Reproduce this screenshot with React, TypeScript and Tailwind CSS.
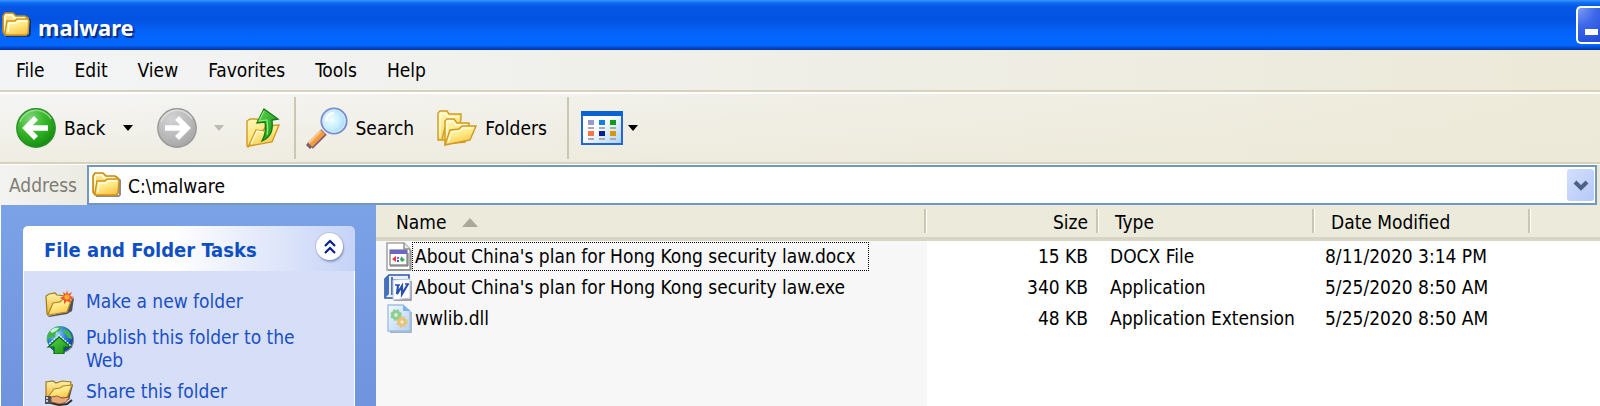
import type { ReactNode } from "react";

const menuItems = ["File", "Edit", "View", "Favorites", "Tools", "Help"];

const files = [
  {
    name: "About China's plan for Hong Kong security law.docx",
    size: "15 KB",
    type: "DOCX File",
    modified: "8/11/2020 3:14 PM",
    icon: <UnknownFileIcon />,
    focused: true,
  },
  {
    name: "About China's plan for Hong Kong security law.exe",
    size: "340 KB",
    type: "Application",
    modified: "5/25/2020 8:50 AM",
    icon: <WordIcon />,
    focused: false,
  },
  {
    name: "wwlib.dll",
    size: "48 KB",
    type: "Application Extension",
    modified: "5/25/2020 8:50 AM",
    icon: <DllIcon />,
    focused: false,
  },
];

const tasks = [
  { label: "Make a new folder", icon: <NewFolderIcon /> },
  { label: "Publish this folder to the Web", icon: <PublishIcon /> },
  { label: "Share this folder", icon: <ShareIcon /> },
];

/* ---------- icons ---------- */

function Gradients() {
  return (
    <svg width="0" height="0" className="absolute" aria-hidden="true">
      <defs>
        <linearGradient id="folder" x1="0" y1="0" x2="0.5" y2="1">
          <stop offset="0" stopColor="#fffbc4" />
          <stop offset="0.55" stopColor="#ffe884" />
          <stop offset="1" stopColor="#fbc74e" />
        </linearGradient>
        <linearGradient id="folderBack" x1="0" y1="0" x2="0" y2="1">
          <stop offset="0" stopColor="#fff3a6" />
          <stop offset="1" stopColor="#e6ae35" />
        </linearGradient>
        <radialGradient id="green" cx="0.35" cy="0.25" r="0.8">
          <stop offset="0" stopColor="#7fd67a" />
          <stop offset="0.45" stopColor="#3aba2b" />
          <stop offset="1" stopColor="#128a0c" />
        </radialGradient>
        <radialGradient id="gray" cx="0.35" cy="0.25" r="0.85">
          <stop offset="0" stopColor="#d2d2d2" />
          <stop offset="0.5" stopColor="#bdbdbd" />
          <stop offset="1" stopColor="#a3a3a3" />
        </radialGradient>
        <linearGradient id="greenArrow" x1="0" y1="0" x2="1" y2="1">
          <stop offset="0" stopColor="#5fd84f" />
          <stop offset="1" stopColor="#118a12" />
        </linearGradient>
        <radialGradient id="lens" cx="0.4" cy="0.45" r="0.6">
          <stop offset="0" stopColor="#f2feff" />
          <stop offset="0.6" stopColor="#c5eefe" />
          <stop offset="1" stopColor="#9cd3fb" />
        </radialGradient>
        <radialGradient id="globe" cx="0.35" cy="0.3" r="0.75">
          <stop offset="0" stopColor="#a5dcff" />
          <stop offset="0.5" stopColor="#2f7fe0" />
          <stop offset="1" stopColor="#0b3f9c" />
        </radialGradient>
        <linearGradient id="viewsBg" x1="0" y1="0" x2="1" y2="1">
          <stop offset="0.4" stopColor="#ffffff" />
          <stop offset="1" stopColor="#a9cffb" />
        </linearGradient>
        <linearGradient id="page" x1="0" y1="0" x2="1" y2="1">
          <stop offset="0" stopColor="#f2f9ff" />
          <stop offset="1" stopColor="#b4d3f5" />
        </linearGradient>
      </defs>
    </svg>
  );
}

function FolderIcon() {
  return (
    <svg width="30" height="26" viewBox="0 0 30 26" className="shrink-0" aria-hidden="true">
      <path d="M4 25h23l2-2V8l-2-2v17H4z" fill="#000" opacity="0.45" />
      <path d="M1 20V4l2-3h8l3 3h9l3 2v15l-2 2H3z" fill="url(#folderBack)" stroke="#c48a14" strokeWidth="1.6" />
      <path d="M3 19V5l1-2h6l2 3h11" fill="none" stroke="#fffbdc" strokeWidth="1.6" />
      <path d="M3 21L5 9h8l2-2h11l1 2-1 12-2 2H4z" fill="url(#folder)" stroke="#cf9518" strokeWidth="1.5" />
      <path d="M6 20L7 11h7l2-2h9" fill="none" stroke="#fffde6" strokeWidth="1.4" />
    </svg>
  );
}

function BackIcon() {
  return (
    <svg width="40" height="42" viewBox="0 0 40 42" className="shrink-0" aria-hidden="true">
      <circle cx="20" cy="21" r="19.2" fill="url(#green)" stroke="#2d8f2b" strokeWidth="1.4" />
      <path d="M4 15a17 17 0 0 1 31-3" fill="none" stroke="#a7e6a2" strokeWidth="1.6" opacity="0.7" />
      <path d="M20 11L10 21l10 10M11 21h21" fill="none" stroke="#fff" strokeWidth="5.6" />
    </svg>
  );
}

function ForwardIcon() {
  return (
    <svg width="40" height="42" viewBox="0 0 40 42" className="shrink-0" aria-hidden="true">
      <circle cx="20" cy="21" r="19.2" fill="url(#gray)" stroke="#999" strokeWidth="1.4" />
      <path d="M4 15a17 17 0 0 1 31-3" fill="none" stroke="#e6e6e6" strokeWidth="1.6" opacity="0.7" />
      <path d="M20 11l10 10-10 10M29 21H8" fill="none" stroke="#fff" strokeWidth="5.6" />
    </svg>
  );
}

function UpIcon() {
  return (
    <svg width="34" height="40" viewBox="0 0 34 40" className="shrink-0" aria-hidden="true">
      <path d="M1 38V13l3-2h7l3 3h8v6L9 26 2 39z" fill="url(#folder)" stroke="#cf9a20" strokeWidth="1.4" />
      <path d="M3 38l7-16 7 1 3-5 13-1-7 17z" fill="url(#folder)" stroke="#cf9a20" strokeWidth="1.4" />
      <path d="M5 36l6-13 6 1" fill="none" stroke="#fffce0" strokeWidth="1.3" />
      <path d="M18 1L32 11l-6 1c1 9 0 17-10 21 4-7 4-13 3-19l-8 1z" fill="url(#greenArrow)" stroke="#0f7a10" strokeWidth="1.3" />
      <path d="M18 3l-5 10 8-1c1 7 1 11 0 15" fill="none" stroke="#8eea7b" strokeWidth="1.2" />
    </svg>
  );
}

function SearchIcon() {
  return (
    <svg width="42" height="42" viewBox="0 0 42 42" className="shrink-0" aria-hidden="true">
      <path d="M18 25L4 39" stroke="#8a5a73" strokeWidth="8" />
      <path d="M17 25L4 38" stroke="#f19a3e" strokeWidth="6" />
      <path d="M15 24L3 36" stroke="#ffc888" strokeWidth="2" />
      <path d="M1 37l4 4" stroke="#75626e" strokeWidth="3" />
      <circle cx="28" cy="14" r="12.6" fill="url(#lens)" stroke="#7390cf" strokeWidth="2" />
      <circle cx="28" cy="14" r="11" fill="none" stroke="#d5e5fb" strokeWidth="1.4" />
      <path d="M20 14c0-5 4-8 8-8" fill="none" stroke="#fff" strokeWidth="2.4" />
    </svg>
  );
}

function FoldersIcon() {
  return (
    <svg width="40" height="36" viewBox="0 0 40 36" className="shrink-0" aria-hidden="true">
      <path d="M1 30V3l2-2h7l2 3h12v4l-3 22z" fill="url(#folder)" stroke="#cf9a20" strokeWidth="1.4" />
      <path d="M3 28V4h6l2 3h11" fill="none" stroke="#fffce0" strokeWidth="1.3" />
      <path d="M5 29l3-12" stroke="#cf9a20" strokeWidth="1.2" />
      <path d="M8 34V11l2-2h7l3 4h12v5l-4 14z" fill="url(#folder)" stroke="#cf9a20" strokeWidth="1.4" />
      <path d="M10 30V11h6l3 4h11" fill="none" stroke="#fffce0" strokeWidth="1.3" />
      <path d="M8 35l1-3 4-12 9-1 3-3h14l-6 14z" fill="url(#folder)" stroke="#cf9a20" strokeWidth="1.4" />
      <path d="M11 32l4-10 8-1 3-3h10" fill="none" stroke="#fffce0" strokeWidth="1.3" />
    </svg>
  );
}

function ViewsIcon() {
  return (
    <svg width="42" height="34" viewBox="0 0 42 34" className="shrink-0" aria-hidden="true">
      <rect x="1" y="1" width="40" height="32" fill="url(#viewsBg)" stroke="#2467d3" strokeWidth="2" />
      <rect x="0" y="0" width="42" height="5" fill="#0a63d0" />
      <rect x="7" y="9" width="6" height="5" fill="#9c98d0" />
      <rect x="18" y="9" width="6" height="5" fill="#0f80ea" />
      <rect x="29" y="9" width="6" height="5" fill="#0d9c12" />
      <rect x="7" y="20" width="6" height="5" fill="#ff7446" />
      <rect x="18" y="20" width="6" height="5" fill="#06228e" />
      <rect x="29" y="20" width="6" height="5" fill="#d39a06" />
      <path d="M7 17h6M18 17h6M29 17h6M7 28h6M18 28h6M29 28h6" stroke="#aaa" strokeWidth="2" />
    </svg>
  );
}

function DropArrow({ className }: { className: string }) {
  return (
    <svg width="10" height="6" viewBox="0 0 10 6" className={className} aria-hidden="true">
      <path d="M0 0h10L5 6z" fill="currentColor" />
    </svg>
  );
}

function UnknownFileIcon() {
  return (
    <svg width="28" height="29" viewBox="0 0 28 29" className="shrink-0" aria-hidden="true">
      <path d="M3 1h17l6 6v21H3z" fill="#fff" stroke="#a5a5a5" strokeWidth="1.6" />
      <path d="M20 1v6h6" fill="#e8e8e8" stroke="#8d8d8d" strokeWidth="1.4" />
      <path d="M27 8v20H4" fill="none" stroke="#777" strokeWidth="1" />
      <rect x="6" y="8" width="17" height="15" fill="#fff" stroke="#8b8b8b" strokeWidth="1.4" />
      <rect x="6" y="8" width="17" height="4" fill="#6c66c4" />
      <path d="M6 24h18V11" fill="none" stroke="#6a6a6a" strokeWidth="1" />
      <path d="M12 14v6l-4-3z" fill="#e23a3a" />
      <rect x="13" y="15" width="2" height="2" fill="#b44ad6" />
      <rect x="13" y="18" width="2" height="2" fill="#4a52d6" />
      <path d="M16 17l2-3v3z" fill="#3a78e0" />
      <path d="M18 15l3 3-3 2-2-2z" fill="#38b04a" />
    </svg>
  );
}

function WordIcon() {
  return (
    <svg width="28" height="29" viewBox="0 0 28 29" className="shrink-0" aria-hidden="true">
      <path d="M5 2h20v5H10v18H1V6z" fill="#e9f0fb" stroke="#2b57a8" strokeWidth="1.6" />
      <path d="M1 6l4-4v19l-4 4z" fill="#4570bd" />
      <path d="M8 4v18" stroke="#2b57a8" strokeWidth="1.6" />
      <path d="M27 8v19H10" fill="none" stroke="#888" strokeWidth="1.4" />
      <path d="M9 7l17-1v19l-17 2z" fill="#fff" stroke="#b9c5dc" strokeWidth="1" />
      <path d="M14 12l-1 9 5-8v8l6-10" fill="none" stroke="#2a4fae" strokeWidth="2.2" />
      <path d="M11 12h5M21 11h4" stroke="#2a4fae" strokeWidth="1.4" />
    </svg>
  );
}

function DllIcon() {
  return (
    <svg width="28" height="29" viewBox="0 0 28 29" className="shrink-0" aria-hidden="true">
      <path d="M6 28h21V8" fill="none" stroke="#8e9db0" strokeWidth="1.4" />
      <path d="M4 1h15l7 6v20H4z" fill="url(#page)" stroke="#a3bfe4" strokeWidth="1.4" />
      <path d="M19 1v6h7z" fill="#7fb2ea" />
      <circle cx="12" cy="11" r="3.4" fill="#d9efdb" stroke="#8ccf90" strokeWidth="3" />
      <circle cx="12" cy="11" r="5" fill="none" stroke="#8ccf90" strokeWidth="1.6" strokeDasharray="2 2" />
      <circle cx="18" cy="18" r="3.2" fill="#f7ecd0" stroke="#e6c379" strokeWidth="3" />
      <circle cx="18" cy="18" r="5" fill="none" stroke="#e6c379" strokeWidth="1.6" strokeDasharray="2 2" />
    </svg>
  );
}

function NewFolderIcon() {
  return (
    <svg width="30" height="28" viewBox="0 0 30 28" className="shrink-0" aria-hidden="true">
      <path d="M4 27l18-3 5-3 2-13-2 1-5 13-19 4z" fill="#222" opacity="0.75" />
      <path d="M2 24L1 6l3-2 6-1 2 2 9 1 1 5L9 13 3 25z" fill="url(#folderBack)" stroke="#a27a1b" strokeWidth="1.2" />
      <path d="M3 25l5-12 7-1 3-3 9-1-5 14z" fill="url(#folder)" stroke="#b78a22" strokeWidth="1.2" />
      <path d="M22 0l1 4 4-2-2 4 4 1-4 2 1 4-4-2-3 3v-4l-4-2 4-2-1-4 3 2z" fill="#f2542a" />
      <circle cx="22" cy="7" r="2.6" fill="#ffb02e" />
    </svg>
  );
}

function PublishIcon() {
  return (
    <svg width="30" height="28" viewBox="0 0 30 28" className="shrink-0" aria-hidden="true">
      <circle cx="16" cy="14" r="13" fill="#222" opacity="0.5" />
      <circle cx="15" cy="13" r="13" fill="url(#globe)" />
      <path d="M4 6c4-5 10-6 13-5l-2 4-4 1-1 5-6 1-2 4C1 13 2 9 4 6zM19 3c5 1 8 6 8 10l-4-1-2-4-3-1z" fill="#3fb54a" />
      <path d="M5 5c3-3 6-4 9-3l-3 3-4 2z" fill="#cdf3d2" />
      <path d="M14 11L3 21h6v7h10v-7h7z" fill="url(#greenArrow)" stroke="#0b6a13" strokeWidth="1.2" />
      <path d="M2 20l12-11 12 11" fill="none" stroke="#d9f2dc" strokeWidth="1.4" strokeDasharray="2 1" />
    </svg>
  );
}

function ShareIcon() {
  return (
    <svg width="30" height="28" viewBox="0 0 30 28" className="shrink-0" aria-hidden="true">
      <path d="M5 19l17-2 5-13 1 1-4 15z" fill="#222" opacity="0.75" />
      <path d="M1 17V2l7-1 3 2 6-2 9 1-1 6-15 2-5 9z" fill="url(#folderBack)" stroke="#a27a1b" strokeWidth="1.2" />
      <path d="M3 17l6-8 6-1 3-2 9-1-5 13z" fill="url(#folder)" stroke="#b78a22" strokeWidth="1.2" />
      <path d="M0 16h6v8H0z" fill="#4b4f58" />
      <path d="M1 18h2M1 21h2" stroke="#f5f5f5" strokeWidth="1.4" />
      <path d="M6 23l8 2 8-1 5-4" fill="none" stroke="#2b2b2b" strokeWidth="2" />
      <path d="M6 17l6-1 5 2 8-1-4 5-6 2-9-2z" fill="#e9a877" stroke="#7b4a2a" strokeWidth="0.8" />
    </svg>
  );
}

/* ---------- window parts ---------- */

function TitleBar() {
  return (
    <header className="flex h-[50px] shrink-0 items-center bg-[linear-gradient(to_bottom,#3f93ff_0%,#0a6cf2_6%,#0456e4_14%,#0353e2_42%,#0464fb_66%,#0268ff_90%,#0347c8_96%,#0232a6_100%)] pl-[2px]">
      <FolderIcon />
      <h1 className="flex-1 pt-[3px] pl-[6px] font-['Noto_Sans','Open_Sans',sans-serif] text-[22px] leading-[28px] font-bold text-white [text-shadow:2px_2px_1px_#0a2a80]">
        malware
      </h1>
      <button
        type="button"
        aria-label="Minimize"
        className="flex h-[38px] w-[24px] items-end rounded-l-[5px] border-2 border-r-0 border-white bg-[radial-gradient(circle_at_top_left,#7d9cf4,#3c68ea_45%,#1f49d8)] pb-[7px] pl-[7px]">
        <span className="h-[6px] w-[13px] bg-white" />
      </button>
    </header>
  );
}

function MenuBar() {
  return (
    <nav className="flex h-[42px] shrink-0 items-center border-b-2 border-[#d8d2bd] bg-linear-to-r from-[#f3f4f6] to-[#ece9d8] pl-px">
      {menuItems.map((item) => (
        <button key={item} type="button" className="px-[15px]">
          {item}
        </button>
      ))}
    </nav>
  );
}

function Separator() {
  return <div className="h-[62px] w-[2px] shrink-0 bg-[#cbc7b0]" />;
}

function Toolbar() {
  return (
    <div className="flex h-[72px] shrink-0 items-center border-t-2 border-b-2 border-t-white border-b-[#d8d2bd] bg-[linear-gradient(to_bottom,transparent,#ece9d8aa),linear-gradient(to_right,#f5f5f5,#edead9)] pl-[16px]">
      <button type="button" className="flex items-center gap-[8px]">
        <BackIcon />
        Back
      </button>
      <button type="button" aria-label="Back history" className="w-[44px]">
        <DropArrow className="mx-auto" />
      </button>
      <button type="button" aria-label="Forward" className="ml-[7px]">
        <ForwardIcon />
      </button>
      <button type="button" aria-label="Forward history" className="w-[44px] text-[#bdbbb0]">
        <DropArrow className="mx-auto" />
      </button>
      <button type="button" aria-label="Up" className="mr-[14px] ml-[5px]">
        <UpIcon />
      </button>
      <Separator />
      <button type="button" className="ml-[10px] flex items-center gap-[8px]">
        <SearchIcon />
        Search
      </button>
      <button type="button" className="mr-[20px] ml-[23px] flex items-center gap-[8px]">
        <FoldersIcon />
        Folders
      </button>
      <Separator />
      <button type="button" aria-label="Views" className="ml-[12px] flex items-center gap-[5px]">
        <ViewsIcon />
        <DropArrow className="" />
      </button>
    </div>
  );
}

function AddressBar() {
  return (
    <div className="flex h-[41px] shrink-0 items-stretch border-t border-white bg-[#ece9d8] pr-[3px]">
      <label htmlFor="address" className="flex w-[87px] items-center bg-linear-to-r from-[#f3f3f1] to-[#ecebe2] pl-[9px] text-[#7f7d74]">
        Address
      </label>
      <div className="flex flex-1 items-center border-2 border-[#7198be] bg-white pr-px pl-[3px]">
        <FolderIcon />
        <input
          id="address"
          type="text"
          defaultValue="C:\malware"
          className="min-w-0 flex-1 bg-transparent pt-[2px] pl-[6px] outline-none"
        />
        <button
          type="button"
          aria-label="Show addresses"
          className="flex h-[32px] w-[27px] items-center justify-center rounded-[3px] bg-linear-to-br from-[#d3dffd] to-[#b5c8f7]">
          <svg width="16" height="11" viewBox="0 0 16 11" aria-hidden="true">
            <path d="M2 2l6 6 6-6" fill="none" stroke="#4d6185" strokeWidth="4" />
          </svg>
        </button>
      </div>
    </div>
  );
}

function TaskPane() {
  return (
    <aside className="w-[375px] shrink-0 overflow-hidden bg-linear-to-b from-[#7ba2e7] to-[#7093de] pt-[21px] pr-[21px] pl-[22px]">
      <section className="h-full">
        <div className="flex h-[45px] items-center justify-between rounded-t-[5px] bg-[linear-gradient(to_right,#fff_45%,#c6d3f7)] pr-[12px] pl-[21px]">
          <h2 className="pt-[4px] text-[20px] font-bold text-[#0f4fc4]">File and Folder Tasks</h2>
          <button
            type="button"
            aria-label="Collapse"
            className="mb-[4px] flex h-[27px] w-[27px] items-center justify-center rounded-full bg-white shadow-[1px_2px_2px_#8c9cc8,0_0_0_1px_#b9c3e2]">
            <svg width="12" height="16" viewBox="0 0 12 16" aria-hidden="true">
              <path d="M1 7l5-5 5 5M1 14l5-5 5 5" fill="none" stroke="#0c1e8c" strokeWidth="2.2" />
            </svg>
          </button>
        </div>
        <ul className="flex h-full flex-col gap-[8px] border border-t-0 border-white bg-[#d6dff7] pt-[19px] pr-[20px] pl-[21px]">
          {tasks.map((task) => (
            <li key={task.label}>
              <a href="#" className="flex items-start gap-[11px] leading-[23px] text-[#1a4fc6]">
                {task.icon}
                <span>{task.label}</span>
              </a>
            </li>
          ))}
        </ul>
      </section>
    </aside>
  );
}

function HeaderCell({ children, className }: { children: ReactNode; className: string }) {
  return (
    <th scope="col" className="h-[36px] border-b-4 border-[#d9d5c4] p-0 pr-[1px] font-normal">
      <div className={`flex h-[24px] items-center border-r-2 border-[#c9c6b3] pt-[2px] shadow-[1px_0_0_#fff] ${className}`}>
        {children}
      </div>
    </th>
  );
}

function FileList() {
  return (
    <main className="min-w-0 flex-1 overflow-hidden bg-[linear-gradient(to_right,#f7f7f7_551px,#fff_551px)]">
      <table className="w-full table-fixed border-separate border-spacing-0 text-left">
        <colgroup>
          <col className="w-[551px]" />
          <col className="w-[172px]" />
          <col className="w-[216px]" />
          <col className="w-[216px]" />
          <col />
        </colgroup>
        <thead className="bg-[#ebeadb]">
          <tr>
            <HeaderCell className="gap-[16px] pl-[20px]">
              Name
              <svg width="16" height="9" viewBox="0 0 16 9" aria-hidden="true">
                <path d="M8 0l8 9H0z" fill="#aca899" />
              </svg>
            </HeaderCell>
            <HeaderCell className="justify-end pr-[8px]">Size</HeaderCell>
            <HeaderCell className="pl-[16px]">Type</HeaderCell>
            <HeaderCell className="pl-[16px]">Date Modified</HeaderCell>
            <td className="border-b-4 border-[#d9d5c4] p-0" />
          </tr>
        </thead>
        <tbody>
          {files.map((file) => (
            <tr key={file.name}>
              <td className="p-0 pl-[8px]">
                <div className="flex h-[31px] items-center">
                  {file.icon}
                  <span
                    className={
                      file.focused
                        ? "border border-dotted border-black pr-[12px] pl-[2px] whitespace-nowrap"
                        : "pl-[3px] whitespace-nowrap"
                    }>
                    {file.name}
                  </span>
                </div>
              </td>
              <td className="p-0 pr-[11px] text-right">{file.size}</td>
              <td className="p-0 pl-[11px]">{file.type}</td>
              <td className="p-0 pl-[10px]">{file.modified}</td>
              <td className="p-0" />
            </tr>
          ))}
        </tbody>
      </table>
    </main>
  );
}

export default function App() {
  return (
    <div className="flex h-screen flex-col overflow-hidden bg-white font-['DejaVu_Sans_Condensed','Noto_Sans',sans-serif] text-[19px] leading-[27px] text-black">
      <Gradients />
      <TitleBar />
      <MenuBar />
      <Toolbar />
      <AddressBar />
      <div className="flex min-h-0 flex-1 pl-px">
        <TaskPane />
        <FileList />
      </div>
    </div>
  );
}
